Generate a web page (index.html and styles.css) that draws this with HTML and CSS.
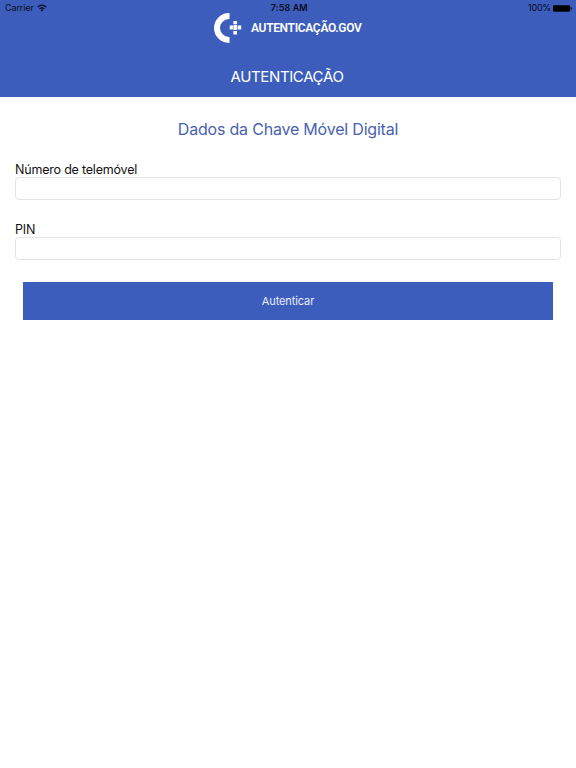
FILE: index.html
```html
<!DOCTYPE html>
<html lang="pt">
<head>
<meta charset="utf-8">
<title>Autenticação</title>
<link rel="stylesheet" href="styles.css">
</head>
<body>
<header class="header">
  <div class="status">
    <div class="status-left">
      <span>Carrier</span>
      <svg class="wifi" viewBox="0 0 10 8"><path d="M.8 3Q5-.7 9.200 3M2.500 4.900Q5 2.700 7.500 4.900" fill="none" stroke="#080c20" stroke-width="1.200"/><path d="M3.600 5.900Q5 4.800 6.400 5.900L5 7.400Z" fill="#080c20"/></svg>
    </div>
    <span class="time">7:58 AM</span>
    <div class="status-right">
      <span>100%</span>
      <svg class="battery" viewBox="0 0 19 7"><rect width="17" height="6.500" y=".25" rx="1.300"/><path d="M17.500 2.100q1.300.2 1.300 1.400t-1.300 1.400Z"/></svg>
    </div>
  </div>
  <div class="brand">
    <svg class="logo" viewBox="0 0 28 30"><path d="M15.500 0H15A15 15 0 0 0 15 30H15.500V24H15A9 9 0 0 1 15 6H15.500Z"/><path d="M19.400 8h3.500v3.300h-3.500zM15.700 12.500h3.200v4h-3.200zM19.400 11.900h3.500v5.100h-3.500zM23.600 12.500h3.600v4h-3.600zM19.400 18h3.500v3.600h-3.500z"/></svg>
    <span class="brand-name">AUTENTICAÇÃO.GOV</span>
  </div>
  <h1 class="title">AUTENTICAÇÃO</h1>
</header>
<main class="content">
  <h2 class="subtitle">Dados da Chave Móvel Digital</h2>
  <form class="form">
    <label class="label" for="phone">Número de telemóvel</label>
    <input class="field" id="phone" type="tel">
    <label class="label" for="pin">PIN</label>
    <input class="field" id="pin" type="password">
    <button class="submit" type="button">Autenticar</button>
  </form>
</main>
</body>
</html>
```
FILE: styles.css
```css
* { box-sizing: border-box; }
body { margin: 0; background: #fff; font-family: Inter, "Liberation Sans", sans-serif; color: #111; }
.header { height: 97px; background: #3c5dbb; color: #fff; }
.status { height: 13px; padding: 2px 4px 0 5px; display: grid; grid-template-columns: 1fr auto 1fr; align-items: center; font-size: 9px; line-height: 12px; color: #080c20; }
.status-left, .status-right { display: flex; align-items: center; gap: 4px; }
.status-left { letter-spacing: -.1px; }
.status-right { justify-content: flex-end; gap: 2px; letter-spacing: -.2px; }
.wifi { width: 10px; height: 8px; margin-left: -.5px; }
.battery { width: 19px; height: 7px; fill: #000; }
.time { font-weight: 600; letter-spacing: .1px; transform: translateX(.7px); }
.brand { height: 30px; padding-left: 214px; display: flex; align-items: center; gap: 9px; }
.logo { width: 28px; height: 30px; fill: #fff; }
.brand-name { font: 600 12px/16px Roboto, sans-serif; letter-spacing: -.33px; white-space: nowrap; }
.title { margin: 24px 0 0; padding-right: 2px; font-size: 15px; line-height: 20px; font-weight: 400; letter-spacing: -.37px; text-align: center; }
.content { padding: 21px 15px 0; }
.subtitle { margin: 0 0 21px; font-size: 16px; line-height: 22px; font-weight: 400; letter-spacing: -.2px; text-align: center; color: #4862b0; }
.form { display: flex; flex-direction: column; }
.label { height: 16px; font-size: 12.5px; line-height: 18px; letter-spacing: -.2px; }
.field { height: 23px; margin: 0 0 21px; padding: 0 6px; border: 1px solid #e4e4e4; border-radius: 4px; background: #fff; font: inherit; font-size: 13px; }
.submit { height: 38px; margin: 1px 8px 0; padding: 0; border: 0; background: #3c5dbb; color: #e9eefb; font: inherit; font-size: 11px; letter-spacing: -.1px; }
```
